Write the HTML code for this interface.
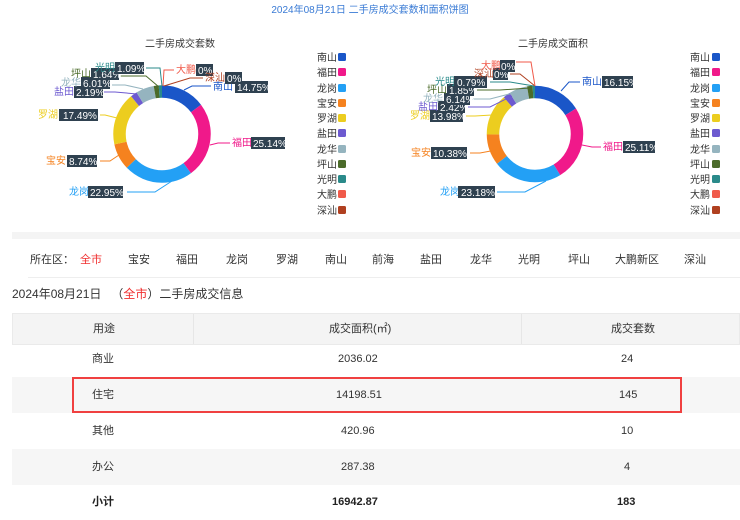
<!DOCTYPE html>
<html><head><meta charset="utf-8"><style>
body{margin:0;width:740px;height:514px;overflow:hidden;background:#fff;font-family:"Liberation Sans","Noto Sans CJK SC",sans-serif;position:relative}
.a{position:absolute;white-space:nowrap}
svg text{font-family:"Liberation Sans","Noto Sans CJK SC",sans-serif}
.f{font-size:11px;color:#333;top:251px}
.row{position:absolute;left:12px;width:728px;height:36px;font-size:11px;color:#333}
.row span{position:absolute;top:0;line-height:36px}
</style></head><body>
<svg class="a" style="left:0;top:0" width="740" height="232" viewBox="0 0 740 232">
<text x="370" y="13" text-anchor="middle" font-size="10" fill="#3a7bd5">2024年08月21日 二手房成交套数和面积饼图</text>
<text x="180" y="47" text-anchor="middle" font-size="10" fill="#333">二手房成交套数</text>
<text x="553" y="47" text-anchor="middle" font-size="10" fill="#333">二手房成交面积</text>
<g transform="translate(4 0)">
<g transform="rotate(-90 158 134)" fill="none" stroke-width="12.5">
<circle cx="158" cy="134" r="42.5" pathLength="100" stroke="#1a56c8" stroke-dasharray="14.75 100" stroke-dashoffset="0"/>
<circle cx="158" cy="134" r="42.5" pathLength="100" stroke="#f0198a" stroke-dasharray="25.14 100" stroke-dashoffset="-14.75"/>
<circle cx="158" cy="134" r="42.5" pathLength="100" stroke="#23a0f5" stroke-dasharray="22.95 100" stroke-dashoffset="-39.89"/>
<circle cx="158" cy="134" r="42.5" pathLength="100" stroke="#f5821f" stroke-dasharray="8.74 100" stroke-dashoffset="-62.84"/>
<circle cx="158" cy="134" r="42.5" pathLength="100" stroke="#eccd1f" stroke-dasharray="17.49 100" stroke-dashoffset="-71.58"/>
<circle cx="158" cy="134" r="42.5" pathLength="100" stroke="#6d5ad0" stroke-dasharray="2.19 100" stroke-dashoffset="-89.07"/>
<circle cx="158" cy="134" r="42.5" pathLength="100" stroke="#95b4bf" stroke-dasharray="6.01 100" stroke-dashoffset="-91.26"/>
<circle cx="158" cy="134" r="42.5" pathLength="100" stroke="#4b6b2a" stroke-dasharray="1.64 100" stroke-dashoffset="-97.27"/>
<circle cx="158" cy="134" r="42.5" pathLength="100" stroke="#2a8a8a" stroke-dasharray="1.09 100" stroke-dashoffset="-98.91"/>
</g></g>
<g transform="translate(6 0)">
<g transform="rotate(-90 529 134)" fill="none" stroke-width="12.5">
<circle cx="529" cy="134" r="42" pathLength="100" stroke="#1a56c8" stroke-dasharray="16.15 100" stroke-dashoffset="0"/>
<circle cx="529" cy="134" r="42" pathLength="100" stroke="#f0198a" stroke-dasharray="25.11 100" stroke-dashoffset="-16.15"/>
<circle cx="529" cy="134" r="42" pathLength="100" stroke="#23a0f5" stroke-dasharray="23.18 100" stroke-dashoffset="-41.26"/>
<circle cx="529" cy="134" r="42" pathLength="100" stroke="#f5821f" stroke-dasharray="10.38 100" stroke-dashoffset="-64.44"/>
<circle cx="529" cy="134" r="42" pathLength="100" stroke="#eccd1f" stroke-dasharray="13.98 100" stroke-dashoffset="-74.82"/>
<circle cx="529" cy="134" r="42" pathLength="100" stroke="#6d5ad0" stroke-dasharray="2.42 100" stroke-dashoffset="-88.80"/>
<circle cx="529" cy="134" r="42" pathLength="100" stroke="#95b4bf" stroke-dasharray="6.14 100" stroke-dashoffset="-91.22"/>
<circle cx="529" cy="134" r="42" pathLength="100" stroke="#4b6b2a" stroke-dasharray="1.85 100" stroke-dashoffset="-97.36"/>
<circle cx="529" cy="134" r="42" pathLength="100" stroke="#2a8a8a" stroke-dasharray="0.79 100" stroke-dashoffset="-99.21"/>
</g></g>
<g fill="none" stroke-width="1">
<polyline points="184,90 192,86 211,86" stroke="#1a56c8"/>
<polyline points="210,145 218,143 230,143" stroke="#f0198a"/>
<polyline points="172,181 155,192 127,192" stroke="#23a0f5"/>
<polyline points="122,153 110,161 100,161" stroke="#f5821f"/>
<polyline points="117,118 105,115 100,115" stroke="#eccd1f"/>
<polyline points="137,94 115,92 104,92" stroke="#6d5ad0"/>
<polyline points="143,89 125,85 112,85" stroke="#95b4bf"/>
<polyline points="159,87 146,76 120,76" stroke="#4b6b2a"/>
<polyline points="162,86 160,68 146,68" stroke="#2a8a8a"/>
<polyline points="163,86 164,70 174,70" stroke="#f05a4a"/>
<polyline points="164,86 190,78 203,78" stroke="#b04020"/>
<polyline points="561,91 569,82 580,82" stroke="#1a56c8"/>
<polyline points="582,145 592,147 601,147" stroke="#f0198a"/>
<polyline points="546,181 525,192 497,192" stroke="#23a0f5"/>
<polyline points="496,150 480,153 470,153" stroke="#f5821f"/>
<polyline points="492,115 475,116 466,116" stroke="#eccd1f"/>
<polyline points="512,96 490,107 468,107" stroke="#6d5ad0"/>
<polyline points="517,92 490,99 472,99" stroke="#95b4bf"/>
<polyline points="530,88 500,90 477,90" stroke="#4b6b2a"/>
<polyline points="534,86 510,82 490,82" stroke="#2a8a8a"/>
<polyline points="535,86 520,74 510,74" stroke="#b04020"/>
<polyline points="535,86 531,62 516,62" stroke="#f05a4a"/>
</g>
<g font-size="10">
<text x="213" y="90" fill="#1a56c8">南山</text><rect x="235" y="81" width="33" height="12" fill="#2f4150"/><text x="237" y="91" fill="#fff">14.75%</text>
<text x="232" y="146" fill="#f0198a">福田</text><rect x="251" y="137" width="34" height="12" fill="#2f4150"/><text x="253" y="147" fill="#fff">25.14%</text>
<text x="69" y="195" fill="#23a0f5">龙岗</text><rect x="88" y="186" width="35" height="12" fill="#2f4150"/><text x="90" y="196" fill="#fff">22.95%</text>
<text x="46" y="164" fill="#f5821f">宝安</text><rect x="67" y="155" width="30" height="12" fill="#2f4150"/><text x="69" y="165" fill="#fff">8.74%</text>
<text x="38" y="118" fill="#eccd1f">罗湖</text><rect x="59" y="109" width="39" height="12" fill="#2f4150"/><text x="63" y="119" fill="#fff">17.49%</text>
<text x="54" y="95" fill="#6d5ad0">盐田</text><rect x="74" y="86" width="29" height="12" fill="#2f4150"/><text x="76" y="96" fill="#fff">2.19%</text>
<text x="61" y="86" fill="#95b4bf">龙华</text><rect x="81" y="77" width="29" height="12" fill="#2f4150"/><text x="83" y="87" fill="#fff">6.01%</text>
<text x="71" y="77" fill="#4b6b2a">坪山</text><rect x="91" y="68" width="28" height="12" fill="#2f4150"/><text x="93" y="78" fill="#fff">1.64%</text>
<text x="95" y="71" fill="#2a8a8a">光明</text><rect x="115" y="62" width="29" height="12" fill="#2f4150"/><text x="117" y="72" fill="#fff">1.09%</text>
<text x="176" y="73" fill="#f05a4a">大鹏</text><rect x="196" y="64" width="17" height="12" fill="#2f4150"/><text x="198" y="74" fill="#fff">0%</text>
<text x="205" y="81" fill="#b04020">深汕</text><rect x="225" y="72" width="17" height="12" fill="#2f4150"/><text x="227" y="82" fill="#fff">0%</text>

<text x="582" y="85" fill="#1a56c8">南山</text><rect x="602" y="76" width="31" height="12" fill="#2f4150"/><text x="604" y="86" fill="#fff">16.15%</text>
<text x="603" y="150" fill="#f0198a">福田</text><rect x="623" y="141" width="32" height="12" fill="#2f4150"/><text x="625" y="151" fill="#fff">25.11%</text>
<text x="440" y="195" fill="#23a0f5">龙岗</text><rect x="458" y="186" width="37" height="12" fill="#2f4150"/><text x="461" y="196" fill="#fff">23.18%</text>
<text x="411" y="156" fill="#f5821f">宝安</text><rect x="431" y="147" width="36" height="12" fill="#2f4150"/><text x="433" y="157" fill="#fff">10.38%</text>
<text x="410" y="119" fill="#eccd1f">罗湖</text><rect x="430" y="110" width="33" height="12" fill="#2f4150"/><text x="432" y="120" fill="#fff">13.98%</text>
<text x="418" y="110" fill="#6d5ad0">盐田</text><rect x="438" y="101" width="27" height="12" fill="#2f4150"/><text x="440" y="111" fill="#fff">2.42%</text>
<text x="423" y="102" fill="#95b4bf">龙华</text><rect x="444" y="93" width="26" height="12" fill="#2f4150"/><text x="446" y="103" fill="#fff">6.14%</text>
<text x="427" y="93" fill="#4b6b2a">坪山</text><rect x="447" y="84" width="27" height="12" fill="#2f4150"/><text x="449" y="94" fill="#fff">1.85%</text>
<text x="435" y="85" fill="#2a8a8a">光明</text><rect x="454" y="76" width="33" height="12" fill="#2f4150"/><text x="457" y="86" fill="#fff">0.79%</text>
<text x="474" y="77" fill="#b04020">深汕</text><rect x="493" y="68" width="15" height="12" fill="#2f4150"/><text x="494" y="78" fill="#fff">0%</text>
<text x="481" y="69" fill="#f05a4a">大鹏</text><rect x="500" y="60" width="15" height="12" fill="#2f4150"/><text x="501" y="70" fill="#fff">0%</text>
</g>
<g font-size="10" fill="#333">
<text x="317" y="61">南山</text><text x="317" y="76">福田</text><text x="317" y="92">龙岗</text><text x="317" y="107">宝安</text><text x="317" y="122">罗湖</text><text x="317" y="137">盐田</text><text x="317" y="153">龙华</text><text x="317" y="168">坪山</text><text x="317" y="183">光明</text><text x="317" y="198">大鹏</text><text x="317" y="214">深汕</text>
<text x="690" y="61">南山</text><text x="690" y="76">福田</text><text x="690" y="92">龙岗</text><text x="690" y="107">宝安</text><text x="690" y="122">罗湖</text><text x="690" y="137">盐田</text><text x="690" y="153">龙华</text><text x="690" y="168">坪山</text><text x="690" y="183">光明</text><text x="690" y="198">大鹏</text><text x="690" y="214">深汕</text>
</g>
<g>
<rect x="338" y="53" width="8" height="8" rx="1.5" fill="#1a56c8"/><rect x="338" y="68" width="8" height="8" rx="1.5" fill="#f0198a"/><rect x="338" y="84" width="8" height="8" rx="1.5" fill="#23a0f5"/><rect x="338" y="99" width="8" height="8" rx="1.5" fill="#f5821f"/><rect x="338" y="114" width="8" height="8" rx="1.5" fill="#eccd1f"/><rect x="338" y="129" width="8" height="8" rx="1.5" fill="#6d5ad0"/><rect x="338" y="145" width="8" height="8" rx="1.5" fill="#95b4bf"/><rect x="338" y="160" width="8" height="8" rx="1.5" fill="#4b6b2a"/><rect x="338" y="175" width="8" height="8" rx="1.5" fill="#2a8a8a"/><rect x="338" y="190" width="8" height="8" rx="1.5" fill="#f05a4a"/><rect x="338" y="206" width="8" height="8" rx="1.5" fill="#b04020"/>
<rect x="712" y="53" width="8" height="8" rx="1.5" fill="#1a56c8"/><rect x="712" y="68" width="8" height="8" rx="1.5" fill="#f0198a"/><rect x="712" y="84" width="8" height="8" rx="1.5" fill="#23a0f5"/><rect x="712" y="99" width="8" height="8" rx="1.5" fill="#f5821f"/><rect x="712" y="114" width="8" height="8" rx="1.5" fill="#eccd1f"/><rect x="712" y="129" width="8" height="8" rx="1.5" fill="#6d5ad0"/><rect x="712" y="145" width="8" height="8" rx="1.5" fill="#95b4bf"/><rect x="712" y="160" width="8" height="8" rx="1.5" fill="#4b6b2a"/><rect x="712" y="175" width="8" height="8" rx="1.5" fill="#2a8a8a"/><rect x="712" y="190" width="8" height="8" rx="1.5" fill="#f05a4a"/><rect x="712" y="206" width="8" height="8" rx="1.5" fill="#b04020"/>
</g>
</svg>
<div class="a" style="left:12px;top:232px;width:728px;height:7px;background:#f4f4f4"></div>
<div class="a f" style="left:30px">所在区：</div>
<div class="a f" style="left:80px;color:#f03030">全市</div>
<div class="a f" style="left:128px">宝安</div>
<div class="a f" style="left:176px">福田</div>
<div class="a f" style="left:226px">龙岗</div>
<div class="a f" style="left:276px">罗湖</div>
<div class="a f" style="left:325px">南山</div>
<div class="a f" style="left:372px">前海</div>
<div class="a f" style="left:420px">盐田</div>
<div class="a f" style="left:470px">龙华</div>
<div class="a f" style="left:518px">光明</div>
<div class="a f" style="left:568px">坪山</div>
<div class="a f" style="left:615px">大鹏新区</div>
<div class="a f" style="left:684px">深汕</div>
<div class="a" style="left:28px;top:277px;width:712px;height:1px;background:#eee"></div>
<div class="a" style="left:12px;top:285px;font-size:12px;color:#333">2024年08月21日 &nbsp;&nbsp;（<span style="color:#f03030">全市</span>）二手房成交信息</div>
<div class="row" style="top:313px;height:32px;background:#f4f4f4;border:1px solid #eaeaea;box-sizing:border-box">
<span style="left:80px;line-height:30px">用途</span><span style="left:316px;line-height:30px">成交面积(㎡)</span><span style="left:598px;line-height:30px">成交套数</span>
<div style="position:absolute;left:180px;top:0;width:1px;height:30px;background:#e6e6e6"></div>
<div style="position:absolute;left:508px;top:0;width:1px;height:30px;background:#e6e6e6"></div>
</div>
<div class="row" style="top:341px"><span style="left:80px">商业</span><span style="left:326px">2036.02</span><span style="left:609px">24</span></div>
<div class="row" style="top:377px;background:#f6f6f6"><span style="left:80px">住宅</span><span style="left:324px">14198.51</span><span style="left:607px">145</span></div>
<div class="row" style="top:413px"><span style="left:80px">其他</span><span style="left:329px">420.96</span><span style="left:609px">10</span></div>
<div class="row" style="top:449px;background:#f6f6f6"><span style="left:80px">办公</span><span style="left:329px">287.38</span><span style="left:612px">4</span></div>
<div class="row" style="top:484px;font-weight:bold;color:#222"><span style="left:80px">小计</span><span style="left:320px">16942.87</span><span style="left:605px">183</span></div>
<div class="a" style="left:72px;top:377px;width:610px;height:36px;border:2px solid #f04040;box-sizing:border-box"></div>
</body></html>
